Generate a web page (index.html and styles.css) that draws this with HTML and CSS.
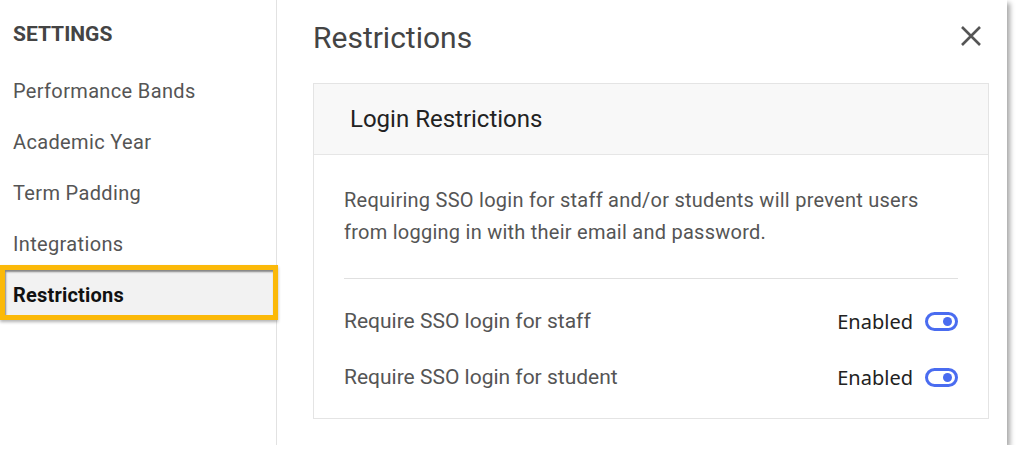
FILE: index.html
```html
<!DOCTYPE html>
<html lang="en">
<head>
    <meta charset="UTF-8">
    <title>Settings - Restrictions</title>
    <link rel="stylesheet" href="styles.css">
</head>
<body>

    <div class="modal">
        <div class="sidebar">
            <h3 class="sidebar-title">SETTINGS</h3>
            <a class="menu-item">Performance Bands</a>
            <a class="menu-item">Academic Year</a>
            <a class="menu-item">Term Padding</a>
            <a class="menu-item">Integrations</a>
            <a class="menu-item active">Restrictions</a>
        </div>

        <div class="content">
            <div class="content-header">
                <h2>Restrictions</h2>
                <button class="close" aria-label="Close">
                    <svg width="22" height="22" viewBox="0 0 22 22">
                        <path d="M2 2 L20 20 M20 2 L2 20" stroke="#555" stroke-width="2.6" fill="none"/>
                    </svg>
                </button>
            </div>

            <div class="card">
                <div class="card-header">Login Restrictions</div>
                <div class="card-body">
                    <p class="description">Requiring SSO login for staff and/or students will prevent users from logging in with their email and password.</p>
                    <hr class="divider">
                    <div class="row">
                        <span class="row-label">Require SSO login for staff</span>
                        <span class="status">Enabled <span class="toggle"></span></span>
                    </div>
                    <div class="row">
                        <span class="row-label">Require SSO login for student</span>
                        <span class="status">Enabled <span class="toggle"></span></span>
                    </div>
                </div>
            </div>
        </div>
    </div>

</body>
</html>
```

FILE: styles.css
```css
body {
    margin: 0;
    background: #fff;
    font-family: Roboto, "Liberation Sans", Arial, sans-serif;
}

.modal {
    width: 1007px;
    height: 445px;
    background: white;
    display: flex;
    box-shadow: 3px 3px 5px rgba(0, 0, 0, 0.35);
}

/* menu lateral */
.sidebar {
    width: 276px;
    flex-shrink: 0;
    border-right: 1px solid #e2e2e2;
}

.sidebar-title {
    margin: 0 0 20px;
    padding: 22px 0 0 13px;
    line-height: 24px;
    font-size: 21px;
    font-weight: bold;
    color: #444;
}

.menu-item {
    display: block;
    height: 51px;
    line-height: 51px;
    padding-left: 13px;
    font-size: 20px;
    letter-spacing: 0.35px;
    color: #555;
}

.menu-item.active {
    box-sizing: border-box;
    width: 278px;
    height: 55px;
    margin-top: -5px;
    padding: 5px 0 0 8px;
    line-height: 40px;
    border: 5px solid #fbb909;
    background: #f2f2f2;
    color: #111;
    font-weight: bold;
    letter-spacing: 0.2px;
    box-shadow: inset 1px 2px 2px rgba(0, 0, 0, 0.45), 0 2px 3px rgba(0, 0, 0, 0.3);
}

/* contenido */
.content {
    flex: 1;
    padding: 0 18px 0 36px;
}

.content-header {
    display: flex;
    justify-content: space-between;
    align-items: center;
    height: 83px;
}

.content-header h2 {
    margin: 0 0 9px;
    font-size: 30px;
    font-weight: normal;
    color: #444;
}

.close {
    border: none;
    background: none;
    padding: 0;
    margin: 0 7px 11px 0;
    display: flex;
}

.card {
    width: 676px;
    box-sizing: border-box;
    border: 1px solid #e4e4e4;
}

.card-header {
    height: 70px;
    line-height: 70px;
    padding-left: 36px;
    background: #f8f8f8;
    border-bottom: 1px solid #e6e6e6;
    font-size: 24px;
    color: #222;
}

.card-body {
    padding: 29px 30px 13px;
}

.description {
    margin: 0;
    font-size: 20px;
    letter-spacing: 0.25px;
    line-height: 32px;
    color: #555;
}

.divider {
    border: none;
    border-top: 1px solid #e0e0e0;
    margin: 30px 0 14px;
}

.row {
    display: flex;
    justify-content: space-between;
    align-items: center;
    height: 56px;
    font-size: 21px;
    color: #555;
}

.status {
    display: flex;
    align-items: center;
    gap: 12px;
    font-family: "Noto Sans", "Open Sans", sans-serif;
    font-size: 20px;
    color: #222;
}

.toggle {
    box-sizing: border-box;
    width: 33px;
    height: 19px;
    border: 3px solid #4a6cf0;
    border-radius: 10px;
    position: relative;
}

.toggle::after {
    content: "";
    position: absolute;
    right: 3px;
    top: 2px;
    width: 9px;
    height: 9px;
    border-radius: 50%;
    background: #4a6cf0;
}
```
